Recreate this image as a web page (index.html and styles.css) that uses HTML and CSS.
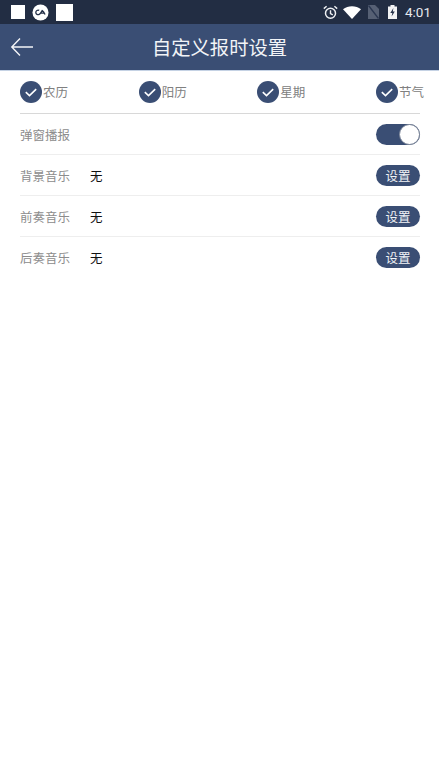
FILE: index.html
```html
<!DOCTYPE html>
<html lang="zh">
<head>
<meta charset="utf-8">
<title>自定义报时设置</title>
<link rel="stylesheet" href="styles.css">
</head>
<body>
<div class="status">
  <div class="status-left">
    <span class="sq sq-a"></span>
    <svg class="ca" viewBox="0 0 18 18"><circle cx="9" cy="9" r="8.500" fill="#fff"/><path d="M7.600 6.800a2.400 2.400 0 1 0 0 4.200Q9 10.200 10.800 7q1.500 1 3 4.200M9.800 9.600h3.400" fill="none" stroke="#26324a" stroke-width="1.400"/></svg>
    <span class="sq sq-b"></span>
  </div>
  <div class="status-right">
    <svg class="alarm" viewBox="0 0 15 15"><circle cx="7.500" cy="8.300" r="5" fill="none" stroke="#eef0f3" stroke-width="1.500"/><path d="M7.500 5.300v3.300l2.300 1.300M.8 3.600 3.600 1.200M14.200 3.600 11.400 1.200" fill="none" stroke="#eef0f3" stroke-width="1.400"/></svg>
    <svg class="wifi" viewBox="0 0 18 13"><path d="M0 3.200C5-.8 13-.8 18 3.200L9 13z" fill="#fff"/></svg>
    <svg class="sim" viewBox="0 0 11 14"><path d="M0 0h7l4 4v10H0z" fill="#566074"/><path d="M.5 .5l10 13" stroke="#2a3650" stroke-width="1.300"/></svg>
    <svg class="batt" viewBox="0 0 9 14"><path d="M2.500 0h4v1.500H9V14H0V1.500h2.500z" fill="#f2f3f5"/><path d="M5.400 3 2.300 8h2l-.7 3.600L6.800 6.500h-2z" fill="#26324a"/></svg>
    <span class="time">4:01</span>
  </div>
</div>
<header class="bar">
  <svg class="back" viewBox="0 0 24 20"><path d="M23 10H2M10 1.500 1.800 10l8.200 8.500" fill="none" stroke="#f4f5f8" stroke-width="1.400"/></svg>
  <h1 class="title">自定义报时设置</h1>
</header>
<main class="content">
  <div class="checks">
    <div class="check"><svg class="tick" viewBox="0 0 22 22"><circle cx="11" cy="11" r="11" fill="#3a4e74"/><path d="M5.800 11.200l3.700 3.400 6.700-6.400" fill="none" stroke="#fff" stroke-width="1.600"/></svg><span>农历</span></div>
    <div class="check"><svg class="tick" viewBox="0 0 22 22"><circle cx="11" cy="11" r="11" fill="#3a4e74"/><path d="M5.800 11.200l3.700 3.400 6.700-6.400" fill="none" stroke="#fff" stroke-width="1.600"/></svg><span>阳历</span></div>
    <div class="check"><svg class="tick" viewBox="0 0 22 22"><circle cx="11" cy="11" r="11" fill="#3a4e74"/><path d="M5.800 11.200l3.700 3.400 6.700-6.400" fill="none" stroke="#fff" stroke-width="1.600"/></svg><span>星期</span></div>
    <div class="check"><svg class="tick" viewBox="0 0 22 22"><circle cx="11" cy="11" r="11" fill="#3a4e74"/><path d="M5.800 11.200l3.700 3.400 6.700-6.400" fill="none" stroke="#fff" stroke-width="1.600"/></svg><span>节气</span></div>
  </div>
  <div class="row"><span class="label">弹窗播报</span><div class="switch"><span class="knob"></span></div></div>
  <div class="row"><span class="label">背景音乐</span><span class="value">无</span><button class="btn">设置</button></div>
  <div class="row"><span class="label">前奏音乐</span><span class="value">无</span><button class="btn">设置</button></div>
  <div class="row last"><span class="label">后奏音乐</span><span class="value">无</span><button class="btn">设置</button></div>
</main>
</body>
</html>
```
FILE: styles.css
```css
* { box-sizing: border-box; }
html, body { margin: 0; padding: 0; }
body {
  width: 439px;
  height: 780px;
  background: #fff;
  overflow: hidden;
  font-family: "Noto Sans CJK SC", "Noto Sans", sans-serif;
}
.status {
  height: 24px;
  background: #222d43;
  display: flex;
  justify-content: space-between;
  align-items: center;
  padding: 0 10px 0 11px;
}
.status-left, .status-right { display: flex; align-items: center; }
.sq { display: block; background: #fff; }
.sq-a { width: 14px; height: 14px; }
.sq-b { width: 17px; height: 17px; margin-left: 7px; }
.ca { width: 17px; height: 17px; margin-left: 7px; }
.alarm { width: 15px; height: 15px; }
.wifi { width: 18px; height: 13px; margin-left: 5px; }
.sim { width: 11px; height: 14px; margin-left: 7px; }
.batt { width: 9px; height: 14px; margin-left: 9px; }
.time {
  margin-left: 8px;
  width: 24px;
  color: #e6e9ee;
  font: 400 13.500px/24px Roboto, sans-serif;
  white-space: nowrap;
}
.bar {
  height: 47px;
  background: #3a4e74;
  border-bottom: 1px solid #c5d2e4;
  position: relative;
  display: flex;
  align-items: center;
  justify-content: center;
}
.back {
  position: absolute;
  left: 10px;
  top: 13px;
  width: 24px;
  height: 20px;
}
.title {
  margin: 0;
  color: #f2f4f7;
  font-size: 19.300px;
  font-weight: 400;
  line-height: 26px;
}
.content { padding: 0 19px 0 20px; }
.checks {
  height: 43px;
  display: flex;
  justify-content: space-between;
  align-items: center;
  border-bottom: 1px solid #d8d8d8;
}
.check {
  display: flex;
  align-items: center;
  color: #808080;
  font-size: 12.500px;
  line-height: 22px;
}
.check:last-child { margin-right: -4px; }
.check span { margin-left: 1px; }
.tick { width: 22px; height: 22px; display: block; }
.row {
  height: 41px;
  display: flex;
  align-items: center;
  border-bottom: 1px solid #eeeeee;
}
.row.last { border-bottom: 0; }
.label {
  width: 70px;
  color: #8c8c8c;
  font-size: 12.500px;
}
.value {
  color: #111;
  font-size: 12.500px;
  font-weight: 400;
}
.btn {
  margin-left: auto;
  width: 44px;
  height: 21px;
  padding: 0;
  border: 0;
  border-radius: 11px;
  background: #3a4e74;
  color: #f2f4f7;
  font: 400 12.500px/21px "Noto Sans CJK SC", sans-serif;
}
.switch {
  margin-left: auto;
  width: 44px;
  height: 21px;
  border-radius: 11px;
  background: #3a4e74;
  display: flex;
  justify-content: flex-end;
}
.knob {
  width: 21px;
  height: 21px;
  border-radius: 50%;
  background: #fff;
  border: 1px solid #7b8598;
}
```
